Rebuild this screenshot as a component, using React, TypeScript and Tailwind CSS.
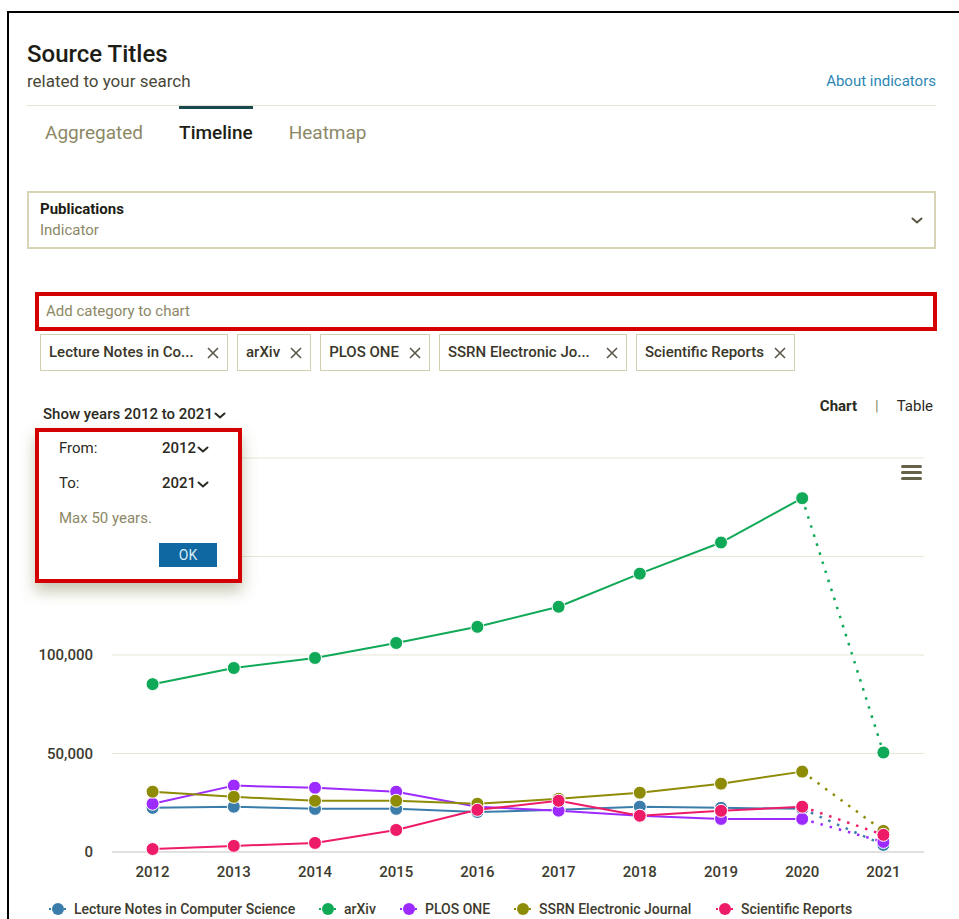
import clsx from "clsx"

const years = [2012, 2013, 2014, 2015, 2016, 2017, 2018, 2019, 2020, 2021]

const series = [
  {
    name: "Lecture Notes in Computer Science",
    color: "#3a7dab",
    data: [22400, 23000, 21900, 21900, 20300, 21400, 23000, 22400, 21900, 3600],
    legendX: 31,
  },
  {
    name: "arXiv",
    color: "#10a957",
    data: [85200, 93400, 98500, 106100, 114300, 124500, 141300, 157100, 179600, 50500],
    legendX: 301,
  },
  {
    name: "PLOS ONE",
    color: "#9d2bff",
    data: [24500, 33700, 32600, 30600, 23000, 21000, 18400, 16800, 16800, 5100],
    legendX: 382,
  },
  {
    name: "SSRN Electronic Journal",
    color: "#8e8b07",
    data: [30600, 28000, 26000, 26000, 24500, 27000, 30100, 34700, 40800, 10700],
    legendX: 496,
  },
  {
    name: "Scientific Reports",
    color: "#ee1c68",
    data: [1500, 3100, 4600, 11200, 21400, 26000, 18400, 20900, 23000, 8700],
    legendX: 698,
  },
]

const chips = [
  { label: "Lecture Notes in Co...", cut: true },
  { label: "arXiv" },
  { label: "PLOS ONE" },
  { label: "SSRN Electronic Jo...", cut: true },
  { label: "Scientific Reports" },
]

const PLOT_LEFT = 85
const PLOT_RIGHT = 897
const ZERO_Y = 422
const PX_PER_UNIT = 98.5 / 50000
const STEP = (PLOT_RIGHT - PLOT_LEFT) / years.length
const xAt = (i: number) => PLOT_LEFT + STEP * (i + 0.5)
const yAt = (v: number) => ZERO_Y - v * PX_PER_UNIT
const ticks = [0, 50000, 100000, 150000, 200000]
// the upper two labels sit under the range picker, so only these are drawn
const labelledTicks = [0, 50000, 100000]

function Chevron({ className }: { className?: string }) {
  return (
    <svg width="12" height="7" viewBox="0 0 12 7" className={className}>
      <path d="M1.5 1.5 L6 5.5 L10.5 1.5" fill="none" stroke="currentColor" strokeWidth="2" strokeLinecap="round" />
    </svg>
  )
}

function Chip({ label, cut }: { label: string; cut?: boolean }) {
  return (
    <div className="flex h-[37px] items-center gap-[10px] border-[1.5px] border-[#d3cfb3] px-[8px]">
      <span className={clsx("text-[15px] font-medium whitespace-nowrap text-[#3a372a]", cut && "w-[148px]")}>{label}</span>
      <svg width="12" height="12" viewBox="0 0 12 12" className="text-[#5b584a]">
        <path d="M1 1 L11 11 M11 1 L1 11" stroke="currentColor" strokeWidth="1.6" />
      </svg>
    </div>
  )
}

function TimelineChart() {
  return (
    <svg width={909} height={495} className="mt-[6px] block">
      {ticks.map((t) => (
        <line
          key={t}
          x1={PLOT_LEFT}
          x2={PLOT_RIGHT}
          y1={yAt(t)}
          y2={yAt(t)}
          stroke={t === 0 ? "#d6d6d6" : "#e8e7d3"}
          strokeWidth={t === 0 ? 1.5 : 1}
        />
      ))}
      {labelledTicks.map((t) => (
        <text key={t} x={66} y={yAt(t) + 5} textAnchor="end" fontSize="15" fontWeight="500" fill="#3d3b2e">
          {t.toLocaleString("en-US")}
        </text>
      ))}

      {years.map((y, i) => (
        <text key={y} x={xAt(i)} y={447} textAnchor="middle" fontSize="15" fontWeight="500" fill="#3d3b2e">
          {y}
        </text>
      ))}

      {/* export menu */}
      <g fill="#666248">
        <rect x={874} y={35} width={21} height={3} rx={1.5} />
        <rect x={874} y={41} width={21} height={3} rx={1.5} />
        <rect x={874} y={47} width={21} height={3} rx={1.5} />
      </g>

      {series.map((s) => {
        const pts = s.data.map((v, i) => [xAt(i), yAt(v)] as const)
        const solid = pts.slice(0, 9).map(([x, y], i) => `${i ? "L" : "M"}${x} ${y}`).join(" ")
        const [x8, y8] = pts[8]
        const [x9, y9] = pts[9]
        return (
          <g key={s.name}>
            <path d={solid} fill="none" stroke={s.color} strokeWidth={2} strokeLinejoin="round" />
            <line x1={x8} y1={y8} x2={x9} y2={y9} stroke={s.color} strokeWidth={2.5} strokeDasharray="2.5 7" />
            {pts.map(([x, y], i) => (
              <circle key={i} cx={x} cy={y} r={6.5} fill={s.color} stroke="#fff" strokeWidth={1} />
            ))}
          </g>
        )
      })}

      {series.map((s) => (
        <g key={s.name}>
          <line x1={s.legendX - 9} x2={s.legendX + 9} y1={479} y2={479} stroke={s.color} strokeWidth={2} strokeDasharray="2 3" />
          <circle cx={s.legendX} cy={479} r={6} fill={s.color} />
          <text x={s.legendX + 16} y={484} fontSize="14" fontWeight="500" fill="#3d3b2e">
            {s.name}
          </text>
        </g>
      ))}
    </svg>
  )
}

export default function App() {
  const tabs = ["Aggregated", "Timeline", "Heatmap"]

  return (
    <div className="h-[919px] w-[959px] overflow-hidden bg-white font-['Roboto',sans-serif]">
      <div className="ml-[7px] mt-[11px] h-[960px] border-l-2 border-t-2 border-black pl-[18px] pr-[23px] pt-[27px]">
        <div className="flex items-end justify-between">
          <div>
            <h1 className="text-[24px] leading-[28px] font-medium text-[#1d1d16]">Source Titles</h1>
            <p className="mt-[3px] text-[17px] leading-[20px] text-[#4a4838]">related to your search</p>
          </div>
          <a className="text-[15px] leading-[20px] text-[#2c87b4]">About indicators</a>
        </div>

        <div className="mt-[14px] flex gap-9 border-t border-[#e6e4d1] pl-[18px]">
          {tabs.map((t) => (
            <div
              key={t}
              className={clsx(
                "border-t-[3px] pt-[12px] text-[19px] leading-[24px]",
                t === "Timeline" ? "border-[#17494f] font-medium text-[#1d1d16]" : "border-transparent text-[#8c8866]"
              )}
            >
              {t}
            </div>
          ))}
        </div>

        <div className="mt-[46px] flex h-[58px] items-center justify-between border-2 border-[#d8d4b8] pl-[11px] pr-[11px]">
          <div>
            <div className="text-[15px] leading-[21px] font-bold text-[#1d1d16]">Publications</div>
            <div className="text-[15px] leading-[21px] text-[#8c8866]">Indicator</div>
          </div>
          <Chevron className="text-[#5a5440]" />
        </div>

        <div className="mt-[43px] mr-[-1px] ml-[8px] flex h-[39px] items-center border-4 border-[#d40000] pl-[7px]">
          <span className="text-[15px] text-[#8c8866]">Add category to chart</span>
        </div>

        <div className="mt-[3px] ml-[13px] flex gap-[9px]">
          {chips.map((c) => (
            <Chip key={c.label} label={c.label} cut={c.cut} />
          ))}
        </div>

        <div className="relative mt-[25px] flex items-start justify-between">
          <button className="mt-[8px] ml-[16px] flex items-center gap-[1px] text-[15px] leading-[20px] font-medium text-[#2b2a22]">
            Show years 2012 to 2021
            <Chevron className="mt-[3px]" />
          </button>
          <div className="mr-[3px] flex items-center gap-[18px] text-[15px] leading-[20px] text-[#2b2a22]">
            <span className="font-bold">Chart</span>
            <span className="text-[#8c8866]">|</span>
            <span>Table</span>
          </div>

          {/* year range picker */}
          <div className="absolute top-[32px] left-[8px] z-10 w-[207px] border-4 border-[#d40000] bg-white pt-[6px] pr-[21px] pb-[12px] pl-[20px] shadow-[0_8px_14px_rgba(90,90,30,0.35)]">
            <div className="flex flex-col gap-[15px] text-[15px] leading-[20px] text-[#2b2a22]">
              <div className="flex">
                <span className="w-[103px]">From:</span>
                <span className="flex items-center gap-[1px] font-medium">
                  2012
                  <Chevron className="mt-[3px]" />
                </span>
              </div>
              <div className="flex">
                <span className="w-[103px]">To:</span>
                <span className="flex items-center gap-[1px] font-medium">
                  2021
                  <Chevron className="mt-[3px]" />
                </span>
              </div>
              <div className="text-[#8c8866]">Max 50 years.</div>
            </div>
            <div className="mt-[15px] flex justify-end">
              <button className="h-[24px] w-[58px] bg-[#0f68a2] text-[14px] text-[#d9ecf7]">OK</button>
            </div>
          </div>
        </div>

        <TimelineChart />
      </div>
    </div>
  )
}
